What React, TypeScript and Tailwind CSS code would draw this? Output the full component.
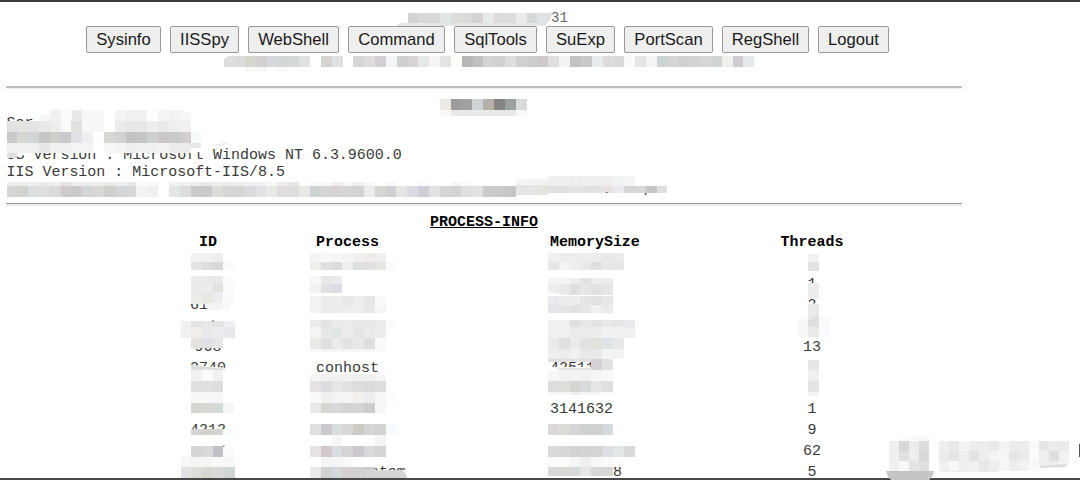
const tools: { label: string; width: string }[] = [
  { label: 'Sysinfo', width: 'w-[75px]' },
  { label: 'IISSpy', width: 'w-[69px]' },
  { label: 'WebShell', width: 'w-[91px]' },
  { label: 'Command', width: 'w-[97px]' },
  { label: 'SqlTools', width: 'w-[83px]' },
  { label: 'SuExp', width: 'w-[69px]' },
  { label: 'PortScan', width: 'w-[89px]' },
  { label: 'RegShell', width: 'w-[87px]' },
  { label: 'Logout', width: 'w-[71px]' },
];

const rows: string[][] = [
  ['', '', '', ''],
  ['', '', '', '1'],
  ['612 ', '', '', '2'],
  ['', '', '', ''],
  ['968', '', '', '13'],
  ['2740', 'conhost', '42511', ''],
  ['', '', '', ''],
  ['', '', '3141632', '1'],
  ['4212', '', '', '9'],
  ['', '', '', '62'],
  ['', '      stem', '       8', '5'],
];

// Each strip is x, y, height and the greys of its cells, left to right.
type Strip = [number, number, number, string];
const CELL = 10.83;

const strips: Strip[] = [
  // host line
  [407.5, 12.5, 10.5, 'd5d3d2 d8d8d8 d8d8d8 e1e5e5 dddddb dcdad9 d3d3d3 e8ebec dcdcdc dddddd ecebea d6d7d9 e0e3e4'],
  // line below the buttons
  [223.5, 56, 10.5, 'dfdddc dbdddc d6d7cf d4d0d2 d6d7dc d3d8d7 d5d9d9 e0e1e1 ffffff d5d3d2 dfe0e1 ffffff d7d5d6 dddbdd d4cfd2 f4f5f8 cfcfce d9d3d5 e4e9e8 f5f5f5 e2e5e4 fdfdf8 b7b7b7 c1c1c1 d4d4d6 d2d1d0 dededc d0d0d0 cccccc cec8cb dfdde0 f4f3f2 c1c3c0 c9c9ca e9ecee dcdcdc dadada fafafa e5e5e4 f4f4f4 cdd3d2 d5d5d4 d1d0cf d5d4d3 d7d7d7 cfd5d4 f0f0ef d0c9cd e6e9eb'],
  [245, 66.5, 5, 'f9f9f9 f9f9f9 ffffff f9f9f9'],
  // section title
  [440, 99, 11, 'ede9e6 9c9c9c a1a1a1 ced3d6 b5b1a9 858384 9aa1a3 d7dbdb'],
  [440, 110, 6, 'f8f8f8 e9e9e9 e9e9e9 e9e9e9 e9e9e9 e9e9e9 e9e9e9 f8f8f8'],
  // server block
  [50, 110, 11, 'f1f2f2 fbfbfb e9e9e9 f7f7f7 f7f7f7 ffffff f2f3f3 f1f1f1 f1f1f1 fdfdfd f4f4f4 f1f2f3 f6f6f6'],
  [39.5, 115, 6, 'f6f6f6'],
  [6.5, 121, 10.5, 'e2e2e1 e3e3e1 e4e4e3 e8e8e8 ededed f9f9f9 e1e0df f7f7f7 f7f7f7 ffffff ebebeb e8e8e8 e8e8e8 eeeeee e9e9e9 efefef f0f0f0'],
  [6.5, 131.5, 11, 'cac8ca d6d6d3 d1d5d5 c6c7c4 d0cfcb cac9cc e0e1e6 eef0f0 ffffff d9d7d4 d2d3d1 c3c4c1 c5c5c5 ced0d1 cac6ca c8cbca d2cecd f5fafb'],
  [6.5, 142.5, 10.5, 'f0f0f0 f1f1f1 efefef e7e7e7 f0f0f0 f0f0f0 f4f4f4 f4f4f4 ffffff f6f6f6 f3f3f3 efefef f0f0f0 f0f0f0 f3f3f3 ededed ebebeb'],
  [190.6, 142.5, 5, 'e9e6e7'],
  [6.5, 153, 5, 'dfdfdf'],
  // path line
  [6.5, 181.5, 5, 'ececec eeeeee f0f0f0 e9e9e9 efefef e5e4e4 eeeeee ebebeb ededed e9e9e9 eeeeee e7e7e7 fafafa f7f7f7 ffffff f2f2f2 f1f1f1 eeeeee e7e7e7 eeeeee ebebeb ededed f0f0f0 f1f1f1 f7f7f7 ebebeb e8e8e8 ffffff f9f9f9 f9f9f9 eeeeee f7f7f7 efefef f7f7f7 ffffff f7f7f7 ffffff ffffff fafafa ffffff ffffff f5f5f5 fafafa'],
  [6.5, 186, 10.5, 'd6d4d4 d2d3d0 dbdfe1 dedede dadada cfcbcc ccc9ca d2d5d5 d7d7d6 d1cfcc d4d5d6 d7d8d9 f2f2f2 f0eeef ffffff e2e6e5 dddddd cbc9ca cbc9cd dcdcda d6d5d5 d6d4d4 dbdbdf e0e2e6 e9e9e5 e0dcde dddddd e7e8e4 cdd3d3 d6d6d6 d7d3d4 d5d5d5 d3d2d5 ebecef d6d5d2 cfd0d1 e5e5e5 dddbe1 cfcdd5 e3e1e2 d6d6d6 d3d3d5 dfdfe1 e1e2e2 cdccc8 cac8c9 c5c5c5'],
  [516, 184, 10.5, 'e4e6e6 e4e6e6 e4e4e1'],
  [516, 178.5, 6, 'f5f5f5 f4f4f3 f2f2f2'],
  [548.2, 176, 10, 'efefef efefef ededed efeff0 eeeeee f0eded f1f2f2 f5f5f5'],
  [548.2, 186, 6.5, 'e0e0e0 e2e1e2 e5e5e8 e2e2e2 e3e2e2 e6e3e2 eaeaed d7d7d6 d9d7d5 c8c5c9 dee0e3'],
  // ID column
  [191, 253, 9, 'f2f2f2 f2f2f2 ebeeed'],
  [191, 262, 8, 'e6e3e4 dddddd d7d9d8 fafbfd'],
  [191, 276, 7.5, 'ebebea ebebeb e8e8e7 fbfcfe'],
  [191, 283.5, 8.5, 'eaeae9 ececec e2e3df fafbfd'],
  [191, 292, 12, 'ececea e9e8e5 ededed fafafa'],
  [208, 303, 7, 'f3f3f3 f8f8f8'],
  [180.5, 320.5, 6, 'f1f1f1 e3e3e3 e8e8e8 e5e5e5 eceef1'],
  [180.5, 326.5, 11, 'eff0f0 f0edeb e8e8e8 eaecee e8e9ec'],
  [191, 337.5, 10, 'e6e2df dfe3e5 e5e6e6'],
  [191, 369.5, 11.5, 'f0f1f1 fbfbf9 f0f0f0'],
  [191, 381, 10.5, 'dfe1e0 dfe1e0 dddedb'],
  [191, 391.5, 11, 'f7f7f7 f7f7f7 f7f7f7'],
  [191, 402.5, 10.5, 'd5d6d2 dad8d1 d4dad9 f5f6f9'],
  [191, 429, 6, 'd5d6d4 d5cfcb d4d4d4 f7fafc'],
  [191, 446, 11, 'd6d6d6 d9d9d9 c2c0c7 fafbfd'],
  [180.5, 457, 10, 'f8f8f8 f4f4f4 f6f6f6 f8f8f8 f8f8f8'],
  [180.5, 467, 11, 'e6e1e6 dfdcdc d8d8d2 d9dbdb d0d6d4'],
  // Process column
  [310, 253, 9, 'f5f5f5 f8f8f8 f6f6f6 f4f4f4 f3f1f0 f0ebe9 eff1f1'],
  [310, 262, 8, 'eeeee9 e0e0e0 dbdbdb eeeeee dce1e0 e2e0e1 e5e5e1 f9fbfc'],
  [310, 276, 7.5, 'f7f7f7 e9e7e8 ebebeb'],
  [310, 283.5, 9, 'f2f2f2 e3e1df dddbe3'],
  [310, 296, 9.5, 'f2f2f1 ebebec ededed eae8e8 ececec e7e7e7 f8fafa'],
  [310, 305.5, 7, 'f3f3f3 ebebea ededed ededed ededed e8e8e8 f5f5f5'],
  [310, 320, 6.5, 'ecebea e2e5e3 eaebea ededed e8e8e8 e8e8e8 ebedec fbfcfd'],
  [310, 326.5, 11, 'f3f4f4 e7e7e7 e0e5e5 ececec e5e5e6 ebebeb ededed'],
  [310, 337.5, 11, 'e9e9e6 dfe1e0 ebebeb e5e2e3 e8e8e8 dfdfdf f9fafa'],
  [310, 348.5, 3, 'f8f8f8 f5f5f5 f5f5f5 f5f5f5 f5f5f5 f5f5f5 f9fafa'],
  [310, 374, 7, 'f5f5f5 f1f1f1 f1f1f1 f2f2f2 efefef f1f1f1 f5f5f5'],
  [310, 381, 10.5, 'e6e2e3 dddce1 e6e6e6 e4e1e3 dddddd dbdbdb dcdedd'],
  [310, 391.5, 11, 'fafafa f0f0f0 f4f4f4 f4f4f4 f2f1ee ebeeed f7f7f7 fcfcfc'],
  [310, 402.5, 10.5, 'ebe8e8 d5d6d3 d6d8d9 d3d1d2 d5d5d5 cdcdcd f5f7fa'],
  [310, 424, 11, 'e0dfdd cbc8ce d8dde0 d6d8d6 cdc9c4 d5d5d5 d3d3d1 f8fbfc'],
  [331.6, 435, 11, 'f6f6f6 ffffff ffffff ffffff f4f4f4'],
  [310, 446, 11, 'e6e4e3 d0c8cb d8dde1 d4d6d3 cbc9cd d6d8d9 d4d6d5'],
  [320.8, 457, 10, 'f5f5f5 f5f5f5 f8f8f8'],
  [310, 467, 11, 'ebe9e6 d1d1d1 d5d8da d4cece d0d2d4 cfcdca'],
  // MemorySize column
  [548, 253, 9, 'f0f0f0 ebeceb ebeceb eeeeee ececec e8e8e8 ebebeb'],
  [548, 262, 8, 'e6e6e6 f3f3f3 eeeeee eaeaea e0dfdd e6e8e9 e6e6e6'],
  [548, 278, 5.5, 'f4f4f4 f4f4f4 eeeeee e2e2e2 ececec ececec'],
  [548, 283.5, 11, 'eceded e9e9e8 dfdfdf e6e8e7 e3e0e1 e4e5e6'],
  [548, 296, 9, 'ebe9ed eeedeb ededed e6e6e6 e1e1e1 e7e7e7'],
  [548, 305, 8, 'e6e4e8 e6e4e6 e1e1e1 e6e6e6 f0f1ef ebebeb'],
  [548, 320, 6.5, 'f0f0f0 f0f0f0 dfe0e0 e7e7e7 e3e4e2 e8e8e8 e5e5e5 ebe9ed'],
  [548, 326.5, 11, 'f0f1f1 f0f0f0 ebebe9 ececec ededed f1f1f1 f1f1f1 f0f0f0'],
  [548, 337.5, 11, 'eaeceb dee0e0 ebebeb e3e4e1 e2e2dd dfe5e7 e8e8e8'],
  [548, 348.5, 10, 'eeeeee ececec f0f0f0 e9e9e9 e9e9e9 f4f4f4 f2f2f2'],
  [548, 359, 3, 'dedede e1e1e1 e1e1e1 e0e0e0 d5d1d8 e2e2e2'],
  [591.3, 362, 8, 'd5d1d8 e2e2e2'],
  [548, 370, 11, 'f7f7f7 f1f1f1 f3f3f3 f1f1f1 f6f6f6 f8f8f8'],
  [548, 381, 11, 'dddddd dededb d5d4d1 d7d9da e3e6e5 dfdfdf'],
  [548, 392, 3, 'f7f7f7 f7f7f7 eeeeee f5f5f5 f5f5f5 fafafa'],
  [548, 424, 11, 'dad6d9 dbdbd8 d6d4d6 cfd1d0 d0d0d0 d4d9dc'],
  [548, 446, 11, 'dad9d8 d7d8d8 d2d2d1 d3d3d3 d4d4d2 dedfe4 e2e6e5 dadada'],
  [548, 457, 10, 'fafafa fafafa f4f5f5 eef0f0 f7f7f7 fafafa fcfcfc'],
  [548, 467, 9, 'd8d8d8 d8d8d5 d7dada e7e6e5 d7d6d8 d8d8d8'],
  // Threads column
  [808, 254, 8, 'f2f2f2'],
  [808, 262, 9, 'e2e2e2'],
  [808, 282.5, 16.5, 'ededed'],
  [808, 303.5, 14, 'e9ebea'],
  [797.5, 316.5, 10, 'f7f7f7 dee0df f9fafc'],
  [797.5, 326.5, 10, 'f6f6f4 e9eaea fafbff'],
  [808, 360, 10, 'e6e6e6'],
  [808, 370, 11, 'eef0f0'],
  [808, 381, 11, 'e3e3e3'],
  [808, 392, 3.5, 'f4f4f4'],
];

// Larger patch in the lower right corner; 10px cells.
const cornerStrips: Strip[] = [
  [889, 436, 5, 'ffffff fcfcfc fafafa f8f8f8'],
  [889, 441, 10, 'efefef d7d7d7 ececec dddddd fdfdfd eeeeee e8e8e8 f4f4f4 ededed ededed e9e9e9 f4f4f4 ececec ececec fafafa e6e6e6 ececec eaeaea'],
  [889, 451, 10, 'f0f0f0 e0e0e0 eeeeee d7d7d7 fdfdfd ebebeb e4e4e4 efefef e3e3e3 ededed f3f3f3 f6f6f6 e6e6e6 ebebeb fbfbfb efefef dfdfdf f1f1f1'],
  [889, 461, 10, 'f0f0f0 f8f8f8 e4e4e4 dfdfdf fdfdfd f0f0f0 f7f7f7 eeeeee f2f2f2 e8e8e8 eeeeee f5f5f5 eeeeee f2f2f2 f8f8f8'],
  [1039, 461, 5, 'ededed eeeeee f5f5f5'],
];

function Cells({ data, size }: { data: Strip[]; size: number }) {
  return (
    <g shapeRendering="crispEdges">
      {data.map(([x, y, h, colors], i) =>
        colors.split(' ').map((c, j) =>
          c === 'ffffff' ? null : (
            <rect key={`${i}-${j}`} x={x + j * size} y={y} width={size} height={h} fill={`#${c}`} />
          ),
        ),
      )}
    </g>
  );
}

function Censor() {
  return (
    <svg className="pointer-events-none absolute inset-0" width="1080" height="480" viewBox="0 0 1080 480">
      <g fill="#fff">
        <path d="M6 121H210V152L130 153H34L20 156L6 157.500Z" />
        <path d="M600 176H670V192H600Z" />
        <path d="M188 294H230V310H207V304.500L188 303Z" />
        <path d="M188 336H230V347.500H188Z" />
        <path d="M188 365L228 368V378H188Z" />
        <path d="M188 429H230V438H188Z" />
        <path d="M548 367H612V378H548Z" />
        <path d="M804 283H822V295H804ZM804 303.500H822V315H804Z" />
        <path d="M366 470H408V478H366Z" />
      </g>
      <Cells data={strips} size={CELL} />
      <Cells data={cornerStrips} size={10} />
      <path d="M397 24Q404 22 416 23H546V26H397Z" fill="#e6e6e6" />
      <path d="M547 12.500H552.500Q551 20 547 23Z" fill="#dfe1e2" />
      <path d="M191 365L226 369V370H191Z" fill="#dddddd" />
      <path d="M548 362H575L592 365V369H575Z" fill="none" />
      <path d="M552 367.500L592 368V370H560Z" fill="#e2e2e2" />
      <path d="M365 470H402Q406 472 407 478H365Z" fill="#d5d5d5" />
      <path d="M213 145L229 142L222 146Z" fill="#ececec" />
      <path d="M223 56H229Q225 57 223 61Z" fill="#fff" />
      <path d="M548 292L565 295H548Z" fill="#fff" />
      <path d="M797 317L813 319L797 320Z" fill="#fff" />
      <path d="M180 110H192V113Z" fill="#fff" />
      <path d="M1040 466L1066 464V467L1040 468Z" fill="#dcdcdc" />
      <path d="M942 471H997V472H942Z" fill="#ececec" />
      <path d="M606 192h1.500v1h-1.500zM223 445.500h1.500v1h-1.500zM212 320.500h2v1h-2z" fill="#555" />
    </svg>
  );
}

export default function App() {
  return (
    <div className="relative h-[480px] w-[1080px] overflow-hidden bg-white font-['Courier_New','Liberation_Mono',monospace] text-[14.98px] text-[#3a3a3a]">
      <div className="flex h-full flex-col border-t-2 border-[#3b3a3b]">
        <header className="w-[975px] pt-[7px]">
          <div className="flex h-[17px] items-center pt-[2px] pl-[551px] text-[14px] text-[#666]">31</div>
          <nav className="flex gap-[9px] pl-[86px]">
            {tools.map(({ label, width }) => (
              <button
                key={label}
                className={`${width} h-[27px] shrink-0 rounded-[2px] border border-[#999] bg-[#efefef] font-['Liberation_Sans',Arial,sans-serif] text-[16.6px] leading-[25px] text-[#1a1a1a]`}
              >
                {label}
              </button>
            ))}
          </nav>
        </header>
        <hr className="mt-[33px] ml-[6px] h-[3px] w-[956px] shrink-0 border-t-2 border-b border-t-[#bebebe] border-b-[#ededed]" />
        <section className="flex flex-col pt-[26px] pl-[6.5px] leading-[16.6px] whitespace-pre">
          <p>Ser</p>
          <p className="-mt-px">&nbsp;</p>
          <p>OS Version : Microsoft Windows NT 6.3.9600.0</p>
          <p>IIS Version : Microsoft-IIS/8.5</p>
          <p className="pl-[637px]">p</p>
        </section>
        <hr className="mt-[6px] ml-[6px] h-[3px] w-[956px] shrink-0 border-t border-b-2 border-t-[#999] border-b-[#ededed]" />
        <h2 className="flex h-[26px] shrink-0 items-center justify-center pt-[7px] pr-[112px] font-bold text-black underline">PROCESS-INFO</h2>
        <div className="grid shrink-0 auto-rows-[20.9px] grid-cols-[216px_234px_224px_76px] items-center pl-[100px] whitespace-pre">
          <b className="text-center text-black">ID</b>
          <b className="text-black">Process</b>
          <b className="text-black">MemorySize</b>
          <b className="text-center text-black">Threads</b>
          {rows.flatMap((row, r) =>
            row.map((cell, c) => (
              <span key={`${r}-${c}`} className={c === 0 || c === 3 ? 'text-center' : ''}>
                {cell}
              </span>
            )),
          )}
        </div>
      </div>
      <Censor />
      <div className="absolute inset-x-0 bottom-0 h-[2px] bg-[#48474a]" />
      <svg className="absolute right-0 bottom-0" width="196" height="42" viewBox="0 0 196 42">
        <path d="M2 33H50Q49 39 45 42H7Q3 38 2 33Z" fill="#c5c5c5" />
        <path d="M195 6h1v13h-1z" fill="#555" />
      </svg>
    </div>
  );
}
